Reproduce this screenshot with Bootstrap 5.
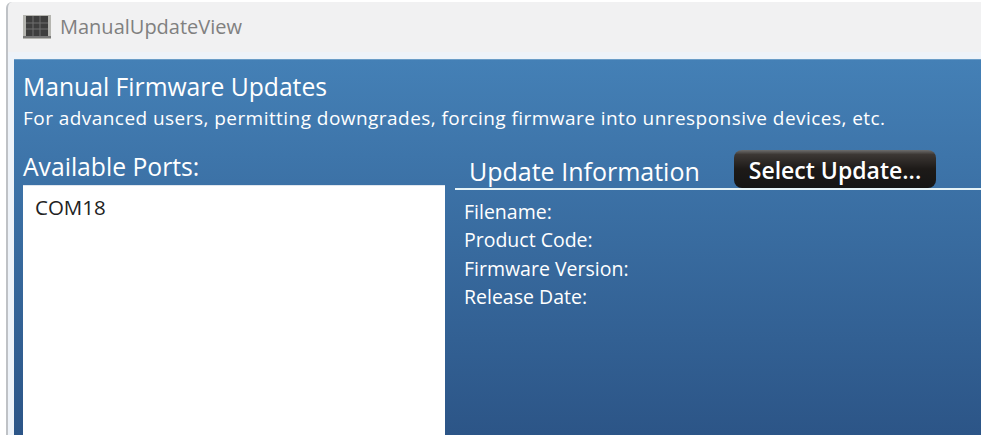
<!DOCTYPE html>
<html lang="en">
<head>
  <meta charset="UTF-8">
  <title>ManualUpdateView</title>
  <link href="https://cdn.jsdelivr.net/npm/bootstrap@5.3.0/dist/css/bootstrap.min.css" rel="stylesheet">
  <style>
    html, body { height: 445px; overflow: hidden; background: #fff; }
    body { font-family: "Open Sans", "Noto Sans", sans-serif; }
    .app-window {
      width: 975px; height: 433px; margin: 2px 0 0 6px;
      background: #f1f1f2; border-left: 2px solid #bfc2c6; border-top-left-radius: 6px;
      overflow: hidden;
    }
    .title-bar { height: 50px; padding-left: 14px; color: #808080; font-size: 20px; }
    .title-bar svg { filter: blur(.5px); }
    .title-strip { height: 7px; background: #eef3f9; }
    .view-wrap { padding-left: 6px; background: #eef3f9; }
    .blue-panel {
      height: 376px; color: #fff; padding: 12px 0 0 9px;
      background: linear-gradient(to bottom, #4480b6, #2c5587);
      border-top: 1px solid #6a9dc8;
    }
    .view-title { font-size: 24.7px; line-height: 30px; }
    .view-sub { font-size: 19px; line-height: 29px; letter-spacing: .45px; padding-top: 2px; }
    .ports-col { width: 422px; }
    .ports-label { font-size: 24.7px; line-height: 30px; margin-top: 19px; margin-bottom: 3px; }
    .ports-list { height: 260px; background: #fff; color: #222; font-size: 20.5px; padding: 6px 12px; border-top: 1px solid #dfe6ee; }
    .info-col { margin-left: 10px; margin-top: 17px; }
    .info-head { height: 40px; padding-left: 14px; border-bottom: 2px solid #e6f3f7; }
    .info-title { font-size: 25px; width: 265px; padding-top: 6px; }
    .select-btn {
      --bs-btn-padding-x: 0; --bs-btn-padding-y: 0; --bs-btn-border-width: 0;
      width: 202px; height: 38px; border-radius: 8px; color: #fff; font-size: 23px; font-weight: 600; padding-top: 3px;
      background: linear-gradient(to bottom, #6d6d6d 0, #3c3734 12%, #1d1a18 50%, #151515 100%);
    }
    .select-btn:hover { color: #fff; }
    .info-rows { padding: 8px 0 0 9px; font-size: 19.5px; line-height: 28.3px; }
  </style>
</head>
<body>
  <div class="app-window">
    <div class="title-bar d-flex align-items-center gap-2">
      <svg width="30" height="28" viewBox="0 0 30 28">
        <rect x="1" y="2" width="28" height="24" fill="#b5b5b0"/>
        <rect x="4" y="3" width="22" height="20" fill="#3e3e3e"/>
        <path d="M11 3v20M18 3v20M4 10h22M4 16h22" stroke="#6f6f6f" stroke-width="1"/>
        <rect x="1" y="23" width="28" height="2" fill="#777"/>
      </svg>
      <span>ManualUpdateView</span>
    </div>
    <div class="title-strip"></div>
    <div class="view-wrap">
      <div class="blue-panel">
        <div class="view-title">Manual Firmware Updates</div>
        <div class="view-sub">For advanced users, permitting downgrades, forcing firmware into unresponsive devices, etc.</div>
        <div class="d-flex">
          <div class="ports-col flex-shrink-0">
            <div class="ports-label">Available Ports:</div>
            <div class="ports-list">COM18</div>
          </div>
          <div class="info-col flex-grow-1">
            <div class="info-head d-flex align-items-center">
              <div class="info-title">Update Information</div>
              <button type="button" class="btn select-btn">Select Update...</button>
            </div>
            <div class="info-rows">
              <div>Filename:</div>
              <div>Product Code:</div>
              <div>Firmware Version:</div>
              <div>Release Date:</div>
            </div>
          </div>
        </div>
      </div>
    </div>
  </div>
</body>
</html>
